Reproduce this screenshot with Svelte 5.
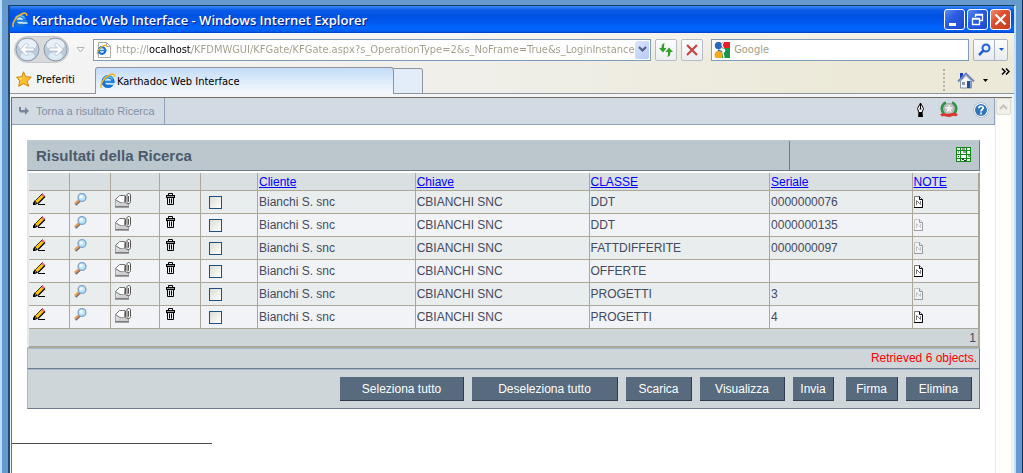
<script lang="ts">
  type Row = { cliente: string; chiave: string; classe: string; seriale: string; note: boolean };

  let rows: Row[] = $state([
    { cliente: 'Bianchi S. snc', chiave: 'CBIANCHI SNC', classe: 'DDT', seriale: '0000000076', note: true },
    { cliente: 'Bianchi S. snc', chiave: 'CBIANCHI SNC', classe: 'DDT', seriale: '0000000135', note: false },
    { cliente: 'Bianchi S. snc', chiave: 'CBIANCHI SNC', classe: 'FATTDIFFERITE', seriale: '0000000097', note: false },
    { cliente: 'Bianchi S. snc', chiave: 'CBIANCHI SNC', classe: 'OFFERTE', seriale: '', note: true },
    { cliente: 'Bianchi S. snc', chiave: 'CBIANCHI SNC', classe: 'PROGETTI', seriale: '3', note: false },
    { cliente: 'Bianchi S. snc', chiave: 'CBIANCHI SNC', classe: 'PROGETTI', seriale: '4', note: true },
  ]);
  let selected: boolean[] = $state([false, false, false, false, false, false]);
  let url = $state('http://localhost/KFDMWGUI/KFGate/KFGate.aspx?s_OperationType=2&s_NoFrame=True&s_LoginInstance');

  const headers = ['Cliente', 'Chiave', 'CLASSE', 'Seriale', 'NOTE'];

  function selectAll(value: boolean) {
    selected = rows.map(() => value);
  }
</script>

{#snippet ie(size: number)}
  <svg width={size} height={size} viewBox="0 0 16 16" aria-hidden="true">
    <circle cx="8" cy="8.6" r="4.8" fill="#d8ecfb" stroke="#1673d2" stroke-width="3.4" />
    <path d="M3.5 6.5C5 2.8 11 2.8 12.5 6.5" fill="none" stroke="#5cc0f5" stroke-width="1.4" />
    <path d="M5 8.8h9.6" stroke="#1c86e0" stroke-width="2.2" />
    <path d="M9.5 10.2h6v1.6h-6z" fill="#d8ecfb" />
    <path d="M1.6 15C-.6 12 3.5 4.5 9.5 1.9c3-1.3 5.6-1 5.2 1.9" fill="none" stroke="#f0b429" stroke-width="1.6" />
  </svg>
{/snippet}

<div class="desktop">
  <div class="window">
    <header class="titlebar">
      {@render ie(16)}
      <h1>Karthadoc Web Interface - Windows Internet Explorer</h1>
      <button class="win" aria-label="Riduci a icona">
        <svg width="19" height="19"><path d="M4 13h7v3H4z" fill="#fff" /></svg>
      </button>
      <button class="win" aria-label="Ripristina">
        <svg width="19" height="19"><path d="M7.5 7V4.500h7v6H12M7 5h8M4.500 8.500h7v6h-7zM4 9h8" fill="none" stroke="#fff" stroke-width="1.3" /></svg>
      </button>
      <button class="win close" aria-label="Chiudi">
        <svg width="19" height="19"><path d="M4.5 4.5l10 10M14.5 4.5l-10 10" stroke="#fff" stroke-width="2.2" /></svg>
      </button>
    </header>

    <div class="chrome">
      <div class="navbar">
        <div class="travel">
          <button aria-label="Indietro">
            <svg width="25" height="25" viewBox="0 0 25 25">
              <circle cx="12.5" cy="12.5" r="11.5" fill="#bccada" stroke="#8d98a8" />
              <ellipse cx="12.5" cy="8" rx="9" ry="6" fill="#e9eff6" />
              <ellipse cx="12.5" cy="19" rx="7" ry="4" fill="#dcebf6" />
              <path d="M5 12.5L11.5 6l2 2-3 3h8.5v3h-8.5l3 3-2 2z" fill="#fff" stroke="#a4b3c4" stroke-width=".7" />
            </svg>
          </button>
          <button aria-label="Avanti">
            <svg width="25" height="25" viewBox="0 0 25 25">
              <circle cx="12.5" cy="12.5" r="11.5" fill="#bccada" stroke="#8d98a8" />
              <ellipse cx="12.5" cy="8" rx="9" ry="6" fill="#e9eff6" />
              <ellipse cx="12.5" cy="19" rx="7" ry="4" fill="#dcebf6" />
              <path d="M20 12.5L13.5 6l-2 2 3 3H6v3h8.500l-3 3 2 2z" fill="#fff" stroke="#a4b3c4" stroke-width=".7" />
            </svg>
          </button>
        </div>
        <button class="recent" aria-label="Pagine recenti">
          <svg width="9" height="6"><path d="M1 .5h7L4.5 5z" fill="#fff" stroke="#b5b5b5" /></svg>
        </button>

        <div class="field address">
          <svg width="16" height="18" viewBox="0 0 16 18" aria-hidden="true">
            <path d="M2.5 1.5h8l4 4v11h-12z" fill="#fff" stroke="#aaa" />
            <path d="M10.5 1.5v4h4" fill="none" stroke="#aaa" />
            <circle cx="6" cy="9.5" r="3.3" fill="none" stroke="#1673d2" stroke-width="2.2" />
            <path d="M4 9.5h6.5" stroke="#1c86e0" stroke-width="1.5" />
            <path d="M1.5 13.5C0 11 4 6.5 7 5c2-1 4-.7 3.5 1" fill="none" stroke="#f0b429" stroke-width="1.2" />
          </svg>
          <input class="url" aria-label="Indirizzo" bind:value={url} />
          <button class="drop" aria-label="Mostra indirizzi">
            <svg width="9" height="7"><path d="M1 1l3.5 3.5L8 1" fill="none" stroke="#4d6185" stroke-width="2.2" /></svg>
          </button>
        </div>
        <button class="tool" aria-label="Aggiorna">
          <svg width="16" height="16" viewBox="0 0 16 16"><path d="M6.5 1C4 1.500 3.500 3.500 3.500 6H1l4 4.500L8.500 6H6c0-2 .2-3.500.5-5zM9.500 15c2.500-.5 3-2.500 3-5H15l-4-4.500L7.500 10H10c0 2-.2 3.500-.5 5z" fill="#35a02c" /></svg>
        </button>
        <button class="tool" aria-label="Termina">
          <svg width="14" height="14" viewBox="0 0 14 14"><path d="M2 2l10 10M12 2L2 12" stroke="#c94444" stroke-width="2.2" /></svg>
        </button>
        <div class="field search">
          <svg width="16" height="16" viewBox="0 0 16 16" aria-hidden="true">
            <path d="M8 0h8v6H8z" fill="#e8202a" />
            <path d="M8 6h8v10H8z" fill="#1a9446" />
            <circle cx="4.5" cy="3.5" r="3.7" fill="#2769bd" />
            <circle cx="9" cy="8.5" r="2.2" fill="#fff" />
            <path d="M4 8.200l4 2" stroke="#2769bd" stroke-width="2" />
            <circle cx="4.5" cy="13" r="4" fill="#f4a81d" />
            <path d="M9.500 0l-1.500 3 1.500 3M9 10l1 6" stroke="#fff" fill="none" stroke-width="1.3" />
          </svg>
          <input aria-label="Cerca" placeholder="Google" />
        </div>
        <div class="go">
          <button aria-label="Avvia ricerca">
            <svg width="13" height="13" viewBox="0 0 13 13"><circle cx="8" cy="5" r="3.500" fill="#e6f0ff" stroke="#2560d8" stroke-width="2" /><path d="M5.5 7.5L1 12" stroke="#2560d8" stroke-width="2.5" /></svg>
          </button>
          <button class="more" aria-label="Opzioni ricerca">
            <svg width="5" height="3"><path d="M0 0h5L2.5 3z" fill="#1e5fd0" /></svg>
          </button>
        </div>
      </div>

      <div class="tabbar">
        <button class="favorites">
          <svg width="16" height="16" viewBox="0 0 16 16"><path d="M7.5.8l2.2 4.900 5.600.5-4.100 3.900 1.500 5.200-5.200-2.600-4.800 2.600 1-5.400L.6 6.200l5.200-.5z" fill="#fdbf2d" stroke="#d08610" /><path d="M7.5 2.500l-1.200 4-3.800.4 2.800 2.300" fill="#ffe58a" /></svg>
          Preferiti
        </button>
        <button class="tab">{@render ie(16)}Karthadoc Web Interface</button>
        <button class="newtab" aria-label="Nuova scheda"></button>
        <div class="commands">
          <span class="grip"></span>
          <button aria-label="Pagina iniziale">
            <svg width="18" height="17" viewBox="0 0 18 17">
              <path d="M3 1h3v6H3z" fill="#1c39c4" />
              <path d="M3.5 9v7h11V9L9 3.5z" fill="#f4f7fb" stroke="#8794aa" />
              <path d="M1 9.500L9 1.500l8 8" fill="none" stroke="#6d83b8" stroke-width="1.800" />
              <path d="M10 9h3.500v7H10z" fill="#244d9c" />
              <path d="M5 10h3v3H5z" fill="#8a95a5" />
            </svg>
          </button>
          <button aria-label="Altre opzioni">
            <svg width="5" height="3"><path d="M0 0h5L2.5 3z" fill="#000" /></svg>
          </button>
          <button class="overflow" aria-label="Altri comandi">
            <svg width="9" height="7"><path d="M1 .5l3 3-3 3M5 .5l3 3-3 3" fill="none" stroke="#000" stroke-width="1.5" /></svg>
          </button>
        </div>
      </div>
    </div>

    <div class="viewport">
      <main>
        <nav class="pagebar">
          <a class="back" href="#ricerca">
            <svg width="10" height="8" viewBox="0 0 10 8"><path d="M0 0h2v3h4V0l4 4-4 4V5.500H1.500L0 4z" fill="#76879a" /></svg>
            Torna a risultato Ricerca
          </a>
          <div class="pageicons">
            <button aria-label="Firma digitale">
              <svg width="9" height="16" viewBox="0 0 9 16"><path d="M4.5 1L1.5 6.500l1.500 4h3l1.500-4z" fill="#fff" stroke="#000" /><path d="M4.5 1v6M3.500 7h2" stroke="#000" /><path d="M2.500 10h4l.5 5H2z" fill="#000" /></svg>
            </button>
            <button aria-label="Repubblica Italiana">
              <svg width="18" height="17" viewBox="0 0 18 17">
                <path d="M6 1.5C1.500 3.500.5 9 4 12.500M12 1.500c4.500 2 5.500 7.500 2 11" fill="none" stroke="#32924a" stroke-width="2.800" />
                <circle cx="9" cy="7.500" r="5" fill="#d4d4d4" stroke="#a5a5a5" />
                <path d="M9 2l1.500 3.500 4 .3-3 2.700 1 4L9 10.500l-3.500 2 1-4-3-2.700 4-.3z" fill="#efefef" stroke="#999" stroke-width=".6" />
                <path d="M1 14.500c3-3 5 .5 8 0s5-3 8 0" fill="none" stroke="#d8372f" stroke-width="3" />
              </svg>
            </button>
            <button aria-label="Aiuto">
              <svg width="16" height="16" viewBox="0 0 16 16"><circle cx="8" cy="8" r="7.500" fill="#8a9bb0" /><circle cx="8" cy="8" r="7" fill="#fff" /><circle cx="8" cy="8" r="6" fill="#2f74bd" /><path d="M5.800 6.300C5.800 3.500 10.300 3.700 10.200 6c0 1.500-2.200 1.500-2.200 3.400M8 10.600v1.800" fill="none" stroke="#fff" stroke-width="1.700" /></svg>
            </button>
          </div>
        </nav>

        <section class="panel">
          <div class="panelhead">
            <h2>Risultati della Ricerca</h2>
            <div class="export">
              <button aria-label="Esporta tabella">
                <svg width="15" height="15" viewBox="0 0 15 15">
                  <path d="M0 0h15v15H0z" fill="#0a8a12" />
                  <path d="M1 1h3v2H1zM5 1h5v2H5zM11 1h3v2h-3zM1 4h3v3H1zM5 4h5v3H5zM11 4h3v3h-3zM1 8h3v3H1zM5 8h5v3H5zM11 8h3v3h-3zM1 12h3v2H1zM5 12h5v2H5zM11 12h3v2h-3z" fill="#fff" />
                  <path d="M6 2h3M7 5h3M12 9h2M6 12.5h2M8 13.5h2M2 5h1M2 9.5h1" stroke="#27392a" />
                </svg>
              </button>
            </div>
          </div>

          <table>
            <colgroup>
              <col class="c-icon" /><col class="c-icon" /><col class="c-mail" /><col class="c-icon" /><col class="c-check" />
              <col class="c-cliente" /><col class="c-chiave" /><col class="c-classe" /><col class="c-seriale" /><col />
            </colgroup>
            <thead>
              <tr>
                <td></td><td></td><td></td><td></td><td></td>
                {#each headers as header}
                  <th><a href="#{header}">{header}</a></th>
                {/each}
              </tr>
            </thead>
            <tbody>
              {#each rows as row, i}
                <tr>
                  <td class="icon">
                    <button aria-label="Modifica">
                      <svg width="13" height="13" viewBox="0 0 13 13">
                        <path d="M2.5 7.5L8.500 1.500l2.500 2.500-6 6-3 1z" fill="#ffc20e" />
                        <path d="M8 2l1.500-1.500L12 2.500 10.500 4z" fill="#f06464" />
                        <path d="M2.500 7.500L9.500.5" stroke="#000" stroke-width=".8" />
                        <path d="M5 10.500L12 3.500" stroke="#000" stroke-width="1.200" />
                        <path d="M0 12v-2l2-3 1 2 2 1.500L2 12zM5 11h7v1H5z" fill="#000" />
                        <path d="M2 9.500l1 .8" stroke="#fff" stroke-width=".8" />
                      </svg>
                    </button>
                  </td>
                  <td class="icon">
                    <button aria-label="Apri">
                      <svg width="13" height="13" viewBox="0 0 13 13">
                        <path d="M6 7.500L1.500 11.800" stroke="#707078" stroke-width="2.500" />
                        <path d="M5 7L.7 10.800" stroke="#f59b4c" stroke-width="2" />
                        <circle cx="8" cy="4.500" r="3.900" fill="#b5e6fc" stroke="#86a2c6" stroke-width="1.400" />
                        <circle cx="7.200" cy="3.700" r="1.700" fill="#f4fcff" />
                      </svg>
                    </button>
                  </td>
                  <td class="icon">
                    <button aria-label="Allegati">
                      <svg width="17" height="15" viewBox="0 0 17 15">
                        <path d="M.5 6.500v7h13v-4L5 9z" fill="#dcdcdf" stroke="#a5a5a8" />
                        <path d="M.5 6.500L4.500 2.500h5.500l-.5 7h-4.500z" fill="#fff" stroke="#777" />
                        <path d="M1 13l5-3.500h4l3 3.500z" fill="#cfcfd2" />
                        <path d="M0 14h14" stroke="#555" />
                        <path d="M10.500 3v5.500c0 3 5 3 5 0V2c0-2-3.500-2-3.500 0v6.500c0 .8 1.500.8 1.500 0V3" fill="#fff" stroke="#555" />
                      </svg>
                    </button>
                  </td>
                  <td class="icon trash">
                    <button aria-label="Elimina documento">
                      <svg width="9" height="12" viewBox="0 0 9 12">
                        <path d="M2.5 2V.5h4V2" fill="none" stroke="#000" />
                        <path d="M0 2h9v3H0z" fill="#000" />
                        <path d="M1 3h7v1H1z" fill="#999" />
                        <path d="M1.5 5v6.500h6V5M3.500 5.500v5M5.500 5.500v5" fill="none" stroke="#000" />
                      </svg>
                    </button>
                  </td>
                  <td class="check"><input type="checkbox" aria-label="Seleziona riga {i + 1}" bind:checked={selected[i]} /></td>
                  <td>{row.cliente}</td>
                  <td>{row.chiave}</td>
                  <td>{row.classe}</td>
                  <td>{row.seriale}</td>
                  <td>
                    <button class="note" class:empty={!row.note} aria-label="Note">
                      <svg width="9" height="12" viewBox="0 0 9 12">
                        <path d="M.5 11.5V.5h5l3 3v8z" fill="#fff" stroke="#777" />
                        <path d="M0 11.5h8.500V3.500H5.500V.5" fill="none" stroke="#000" />
                        <path d="M2.5 9V4.500l4 4V5" fill="none" stroke="#777" />
                      </svg>
                    </button>
                  </td>
                </tr>
              {/each}
            </tbody>
            <tfoot>
              <tr><td colspan="10">1</td></tr>
            </tfoot>
          </table>

          <p class="status">Retrieved 6 objects.</p>

          <div class="actions">
            <button class="w-select" onclick={() => selectAll(true)}>Seleziona tutto</button>
            <button class="w-deselect" onclick={() => selectAll(false)}>Deseleziona tutto</button>
            <button class="w-medium">Scarica</button>
            <button class="w-view">Visualizza</button>
            <button class="w-send">Invia</button>
            <button class="w-sign">Firma</button>
            <button class="w-medium">Elimina</button>
          </div>
        </section>

        <hr />
      </main>
      <div class="scrollbar">
        <button aria-label="Scorri su">
          <svg width="9" height="6"><path d="M1 5l3.5-3.5L8 5" fill="none" stroke="#c2c2ba" stroke-width="2" /></svg>
        </button>
      </div>
    </div>
  </div>
</div>

<style>
  :global(body) {
    margin: 0;
    background: #6699cc;
  }

  .desktop {
    box-sizing: border-box;
    min-height: 100vh;
    display: flex;
    padding-top: 5px;
    border-left: 2px solid #bcdcff;
    border-right: 1px solid #10305c;
    background: #6699cc;
    font-family: "DejaVu Sans Condensed", Tahoma, sans-serif;
    font-size: 11px;
  }

  .window {
    flex: 1;
    min-width: 0;
    display: flex;
    flex-direction: column;
    margin: 0 6px;
    border-top: 1px solid #173f66;
    border-left: 2px solid #234a7d;
    border-right: 2px solid #bfe0ff;
    background: #f3f3f0;
  }

  button {
    display: flex;
    align-items: center;
    justify-content: center;
    padding: 0;
    border: 0;
    background: none;
    font: inherit;
    color: inherit;
  }

  svg {
    display: block;
    flex: none;
  }

  input {
    font: inherit;
  }

  /* title bar */
  .titlebar {
    display: flex;
    align-items: center;
    gap: 2px;
    height: 27px;
    padding: 0 3px 0 2px;
    background: linear-gradient(#3a8dfa 0, #0a5ae8 4px, #0052e2 10px, #0058ee 16px, #0066fd 22px, #0060f6 25px, #0040c8 27px);
  }

  h1 {
    flex: 1;
    margin: 0 0 0 2px;
    font: 600 13px "Open Sans", "Noto Sans", sans-serif;
    color: #fff;
    text-shadow: 1px 1px #0a1883;
    white-space: nowrap;
  }

  .win {
    width: 21px;
    height: 21px;
    border: 1px solid #fff;
    border-radius: 3px;
    background: linear-gradient(135deg, #5c8df5, #2a5be0 40%, #1d48cf);
  }

  .close {
    background: linear-gradient(135deg, #f0906c, #dc5030 40%, #c63c18);
  }

  /* navigation and tabs */
  .chrome {
    background: linear-gradient(#fff6, #fff0 40%), linear-gradient(90deg, #f3f4f4, #f0efe9 45%, #ece9d8 85%);
  }

  .navbar {
    display: flex;
    align-items: center;
    gap: 4px;
    height: 33px;
    padding: 0 6px 0 4px;
  }

  .travel {
    display: flex;
    gap: 3px;
    border: 1px solid #c8c8c8;
    border-radius: 14px;
    background: #d9dadc;
  }

  .recent {
    width: 14px;
    margin-right: 2px;
  }

  .field {
    box-sizing: border-box;
    display: flex;
    align-items: center;
    height: 22px;
    border: 1px solid #7f9db9;
    background: #fff;
    min-width: 0;
  }

  .field input {
    flex: 1;
    min-width: 0;
    margin-left: 4px;
    padding: 0;
    border: 0;
    outline: 0;
    background: none;
  }

  .address {
    flex: 560;
    padding: 0 1px 0 2px;
  }

  /* the host name is darker than the rest of the address */
  .field .url {
    color: transparent;
    background: linear-gradient(90deg, #a09c88 33px, #000 33px, #000 75px, #a09c88 75px);
    -webkit-background-clip: text;
    background-clip: text;
  }

  .drop {
    width: 14px;
    height: 18px;
    border-radius: 2px;
    background: linear-gradient(135deg, #dbe6ff, #b5c9f5);
  }

  .tool {
    width: 22px;
    height: 22px;
    border: 1px solid #b7bdc6;
    border-radius: 2px;
    background: linear-gradient(#fdfdfd, #eceef1);
  }

  .search {
    flex: 255;
    margin-left: 4px;
    padding: 0 2px;
  }

  .search input::placeholder {
    color: #a09c88;
    opacity: 1;
  }

  .go {
    display: flex;
    height: 20px;
    border: 1px solid #a9b5c6;
    border-radius: 2px;
    background: linear-gradient(#fdfdfd, #e9ebee);
  }

  .go button {
    width: 20px;
  }

  .go .more {
    width: 13px;
    border-left: 1px solid #a9b5c6;
  }

  .tabbar {
    box-sizing: border-box;
    display: flex;
    align-items: stretch;
    height: 31px;
    padding-top: 1px;
    border-bottom: 3px solid #f4f5f6;
  }

  .favorites {
    width: 85px;
    gap: 4px;
    padding: 0 14px 2px 0;
    box-sizing: border-box;
    border-bottom: 1px solid #91949c;
  }

  .tab {
    box-sizing: border-box;
    width: 299px;
    justify-content: flex-start;
    padding-left: 4px;
    gap: 1px;
    border: 1px solid #91949c;
    border-bottom: 0;
    border-radius: 3px 3px 0 0;
    background: linear-gradient(#c3dcf8, #e2eefb 60%, #f4f7fb);
    color: #000;
  }

  .newtab {
    box-sizing: border-box;
    width: 29px;
    margin-top: 1px;
    border: 1px solid #91949c;
    border-left: 0;
    border-radius: 0 3px 0 0;
    background: #e2edf9;
  }

  .commands {
    flex: 1;
    display: flex;
    align-items: center;
    justify-content: flex-end;
    gap: 8px;
    padding-right: 4px;
    border-bottom: 1px solid #91949c;
  }

  .grip {
    height: 22px;
    margin-right: 4px;
    border-left: 2px dotted #b5b3a8;
  }

  .overflow {
    align-self: flex-start;
    margin: 1px 0 0 5px;
    height: 7px;
  }

  /* page */
  .viewport {
    flex: 1;
    display: flex;
    margin: 0 2px 0 1px;
    border-top: 1px solid #716f64;
    border-left: 1px solid #716f64;
    background: #fff;
    font: 12px/14px "Liberation Sans", Arial, sans-serif;
    color: #444a60;
  }

  main {
    flex: 1;
    min-width: 0;
  }

  .pagebar {
    display: flex;
    justify-content: space-between;
    height: 26px;
    border-bottom: 1px solid #8ea2bc;
    border-right: 1px solid #8ea2bc;
    background: #d2dbe4;
  }

  .back {
    display: flex;
    align-items: center;
    gap: 7px;
    padding: 0 9px 0 7px;
    border-right: 1px solid #8ea2bc;
    font-size: 11px;
    color: #8390a2;
    text-decoration: none;
  }

  .pageicons {
    display: flex;
    align-items: center;
    gap: 15px;
    padding: 0 5px 3px 0;
  }

  .panel {
    margin: 15px 15px 0 15px;
  }

  .panelhead {
    box-sizing: border-box;
    display: flex;
    height: 31px;
    border: 1px solid #b9cad8;
    border-right-color: #6c7b8e;
    border-bottom-color: #6c7b8e;
    background: #bbc7cc;
  }

  h2 {
    flex: 1;
    margin: 0;
    padding-left: 8px;
    font: bold 15px/29px "Liberation Sans", Arial, sans-serif;
    color: #4b5a6d;
  }

  .export {
    display: flex;
    align-items: center;
    justify-content: flex-end;
    width: 20%;
    box-sizing: border-box;
    padding: 0 8px 3px 0;
    border-left: 1px solid #6c7b8e;
  }

  table {
    width: 100%;
    table-layout: fixed;
    border-collapse: separate;
    border-spacing: 0;
    border: 2px solid #fff;
    border-left-color: #e6e8ea;
    border-right: 1px solid #aca899;
    border-bottom: 1px solid #aca899;
  }

  .c-icon { width: 41px; }
  .c-mail { width: 49px; }
  .c-check { width: 57px; }
  .c-cliente { width: 16.6%; }
  .c-chiave { width: 18.3%; }
  .c-classe { width: 19%; }
  .c-seriale { width: 15%; }

  th, td {
    height: 22px;
    padding: 0 0 0 1px;
    border-right: 1px solid #aca899;
    border-bottom: 1px solid #aca899;
    text-align: left;
    font-weight: normal;
    white-space: nowrap;
  }

  thead {
    background: #dadfe2;
  }

  thead th, thead td, tfoot td {
    height: 17px;
  }

  th a {
    color: #0000ff;
  }

  tbody tr:nth-child(odd) {
    background: #e9edee;
  }

  tbody tr:nth-child(even) {
    background: #f2f3f6;
  }

  .icon {
    padding: 2px 0 0 4px;
    height: 20px;
    vertical-align: top;
  }

  .trash {
    padding-left: 6px;
  }

  .check {
    padding-left: 8px;
  }

  .check input {
    appearance: none;
    display: block;
    box-sizing: border-box;
    width: 13px;
    height: 13px;
    margin: 0;
    border: 1px solid #1c5180;
    background: linear-gradient(135deg, #dcdcd7, #fff);
  }

  .check input:checked {
    background: #21a121;
  }

  .empty {
    opacity: 0.35;
  }

  tfoot td {
    padding-right: 2px;
    background: #cfd6d9;
    text-align: right;
  }

  .status {
    margin: 0;
    padding: 2px;
    border: 1px solid #a5b8cd;
    border-right-color: #6c7b8e;
    border-bottom-color: #6c7b8e;
    background: #cfd6d9;
    text-align: right;
    line-height: 15px;
    color: #ff0000;
  }

  .actions {
    display: flex;
    justify-content: flex-end;
    gap: 8px;
    padding: 7px;
    border: 1px solid #a5b8cd;
    border-right-color: #6c7b8e;
    border-bottom-color: #6c7b8e;
    background: #cfd6d9;
  }

  .actions button {
    box-sizing: border-box;
    height: 24px;
    border: 0 solid #2f3d4e;
    border-width: 0 1px 1px 0;
    background: #576a7e;
    color: #fff;
  }

  .actions .w-select { width: 124px; }
  .actions .w-deselect { width: 146px; }
  .actions .w-medium { width: 66px; }
  .actions .w-view { width: 85px; }
  .actions .w-send { width: 41px; margin-right: 4px; }
  .actions .w-sign { width: 52px; }

  hr {
    width: 200px;
    margin: 34px 0 0;
    border: 0;
    border-top: 1px solid #4a4a50;
  }

  .scrollbar {
    box-sizing: border-box;
    width: 17px;
    border-left: 1px solid #eeede5;
    border-right: 1px solid #eeede5;
    background: #fefefb;
  }

  .scrollbar button {
    box-sizing: border-box;
    width: 15px;
    height: 17px;
    border: 1px solid #dddbd0;
    border-radius: 2px;
    background: #f1f0ea;
  }
</style>
